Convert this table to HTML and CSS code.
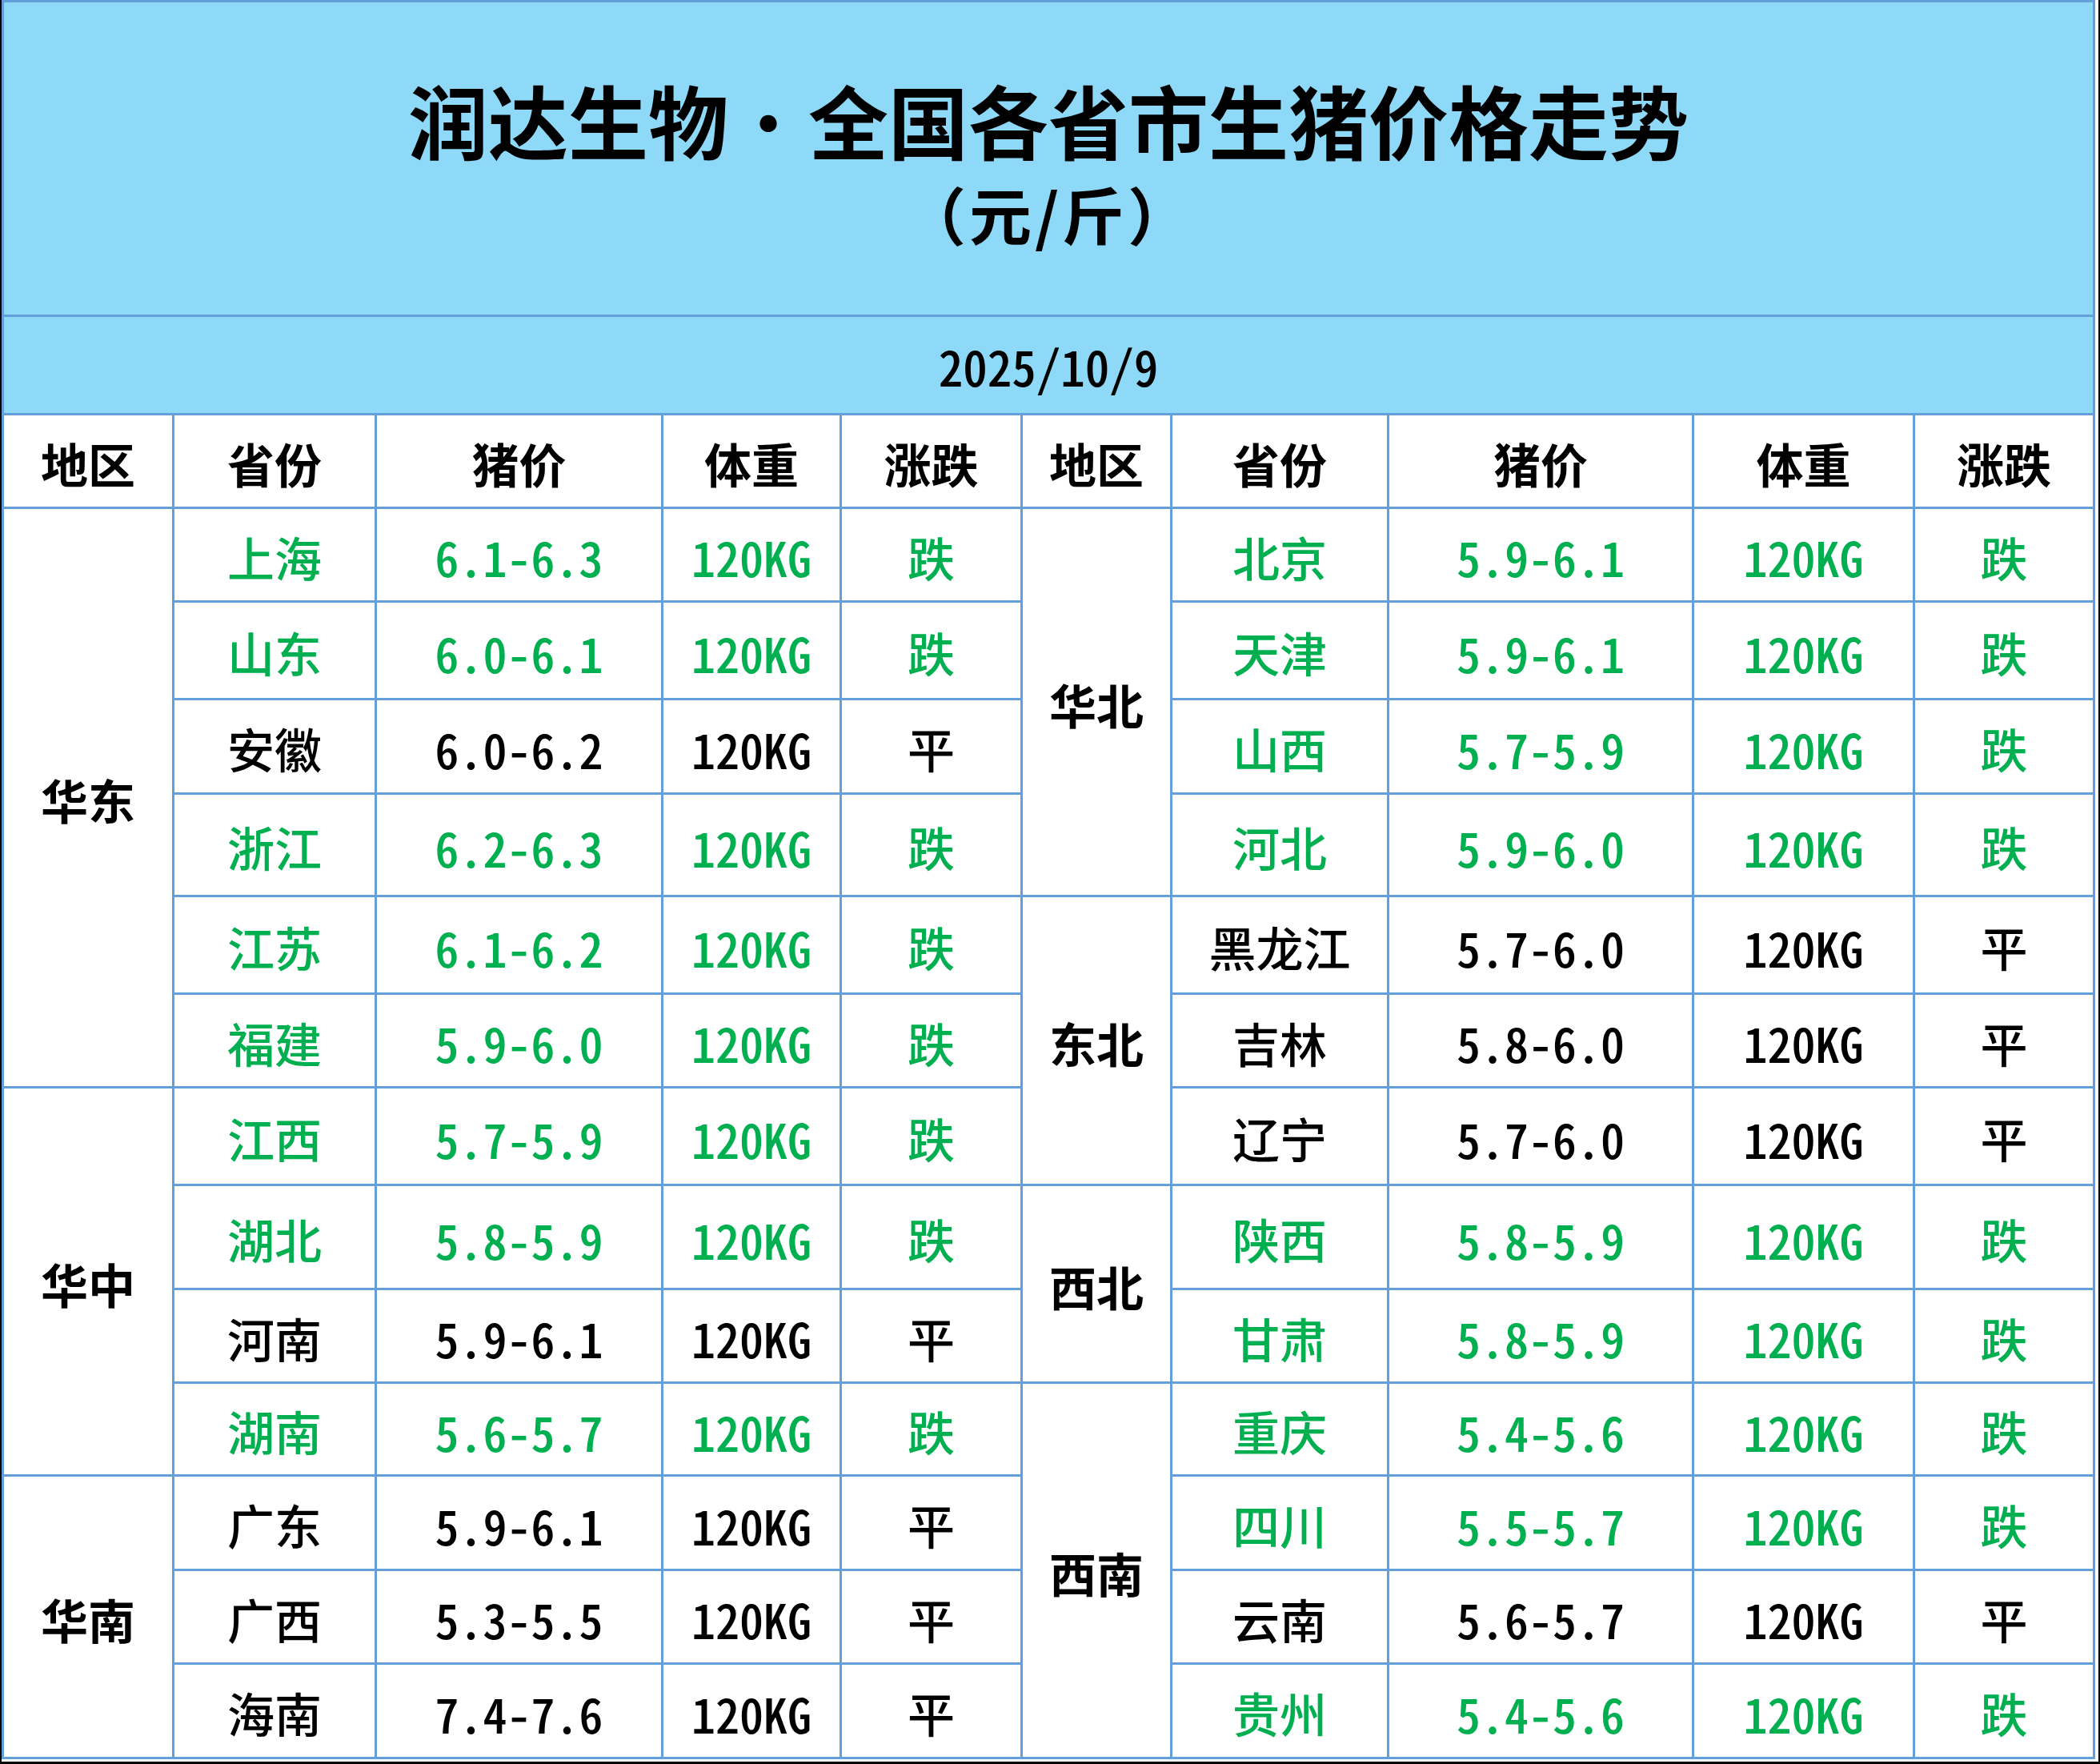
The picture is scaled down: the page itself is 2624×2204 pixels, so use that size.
FILE: index.html
```html
<!DOCTYPE html>
<html lang="zh-CN">
<head>
<meta charset="utf-8">
<title>润达生物·全国各省市生猪价格走势</title>
<link rel="stylesheet" href="styles.css">
</head>
<body>
<div class="frame">
  <div class="sheet">
    <div class="cell title-cell">
      <div class="title">润达生物<span class="dot">·</span>全国各省市生猪价格走势</div>
      <div class="subtitle">（元/斤）</div>
    </div>
    <div class="cell date-cell">2025/10/9</div>

    <div class="cell head">地区</div>
    <div class="cell head">省份</div>
    <div class="cell head">猪价</div>
    <div class="cell head">体重</div>
    <div class="cell head">涨跌</div>
    <div class="cell head">地区</div>
    <div class="cell head">省份</div>
    <div class="cell head">猪价</div>
    <div class="cell head">体重</div>
    <div class="cell head">涨跌</div>

    <!-- row 1 -->
    <div class="cell region span-6">华东</div>
    <div class="cell down">上海</div>
    <div class="cell num down">6.1-6.3</div>
    <div class="cell num down">120KG</div>
    <div class="cell down">跌</div>
    <div class="cell region span-4">华北</div>
    <div class="cell down">北京</div>
    <div class="cell num down">5.9-6.1</div>
    <div class="cell num down">120KG</div>
    <div class="cell down">跌</div>

    <!-- row 2 -->
    <div class="cell down">山东</div>
    <div class="cell num down">6.0-6.1</div>
    <div class="cell num down">120KG</div>
    <div class="cell down">跌</div>
    <div class="cell down">天津</div>
    <div class="cell num down">5.9-6.1</div>
    <div class="cell num down">120KG</div>
    <div class="cell down">跌</div>

    <!-- row 3 -->
    <div class="cell">安徽</div>
    <div class="cell num">6.0-6.2</div>
    <div class="cell num">120KG</div>
    <div class="cell">平</div>
    <div class="cell down">山西</div>
    <div class="cell num down">5.7-5.9</div>
    <div class="cell num down">120KG</div>
    <div class="cell down">跌</div>

    <!-- row 4 -->
    <div class="cell down">浙江</div>
    <div class="cell num down">6.2-6.3</div>
    <div class="cell num down">120KG</div>
    <div class="cell down">跌</div>
    <div class="cell down">河北</div>
    <div class="cell num down">5.9-6.0</div>
    <div class="cell num down">120KG</div>
    <div class="cell down">跌</div>

    <!-- row 5 -->
    <div class="cell down">江苏</div>
    <div class="cell num down">6.1-6.2</div>
    <div class="cell num down">120KG</div>
    <div class="cell down">跌</div>
    <div class="cell region span-3">东北</div>
    <div class="cell">黑龙江</div>
    <div class="cell num">5.7-6.0</div>
    <div class="cell num">120KG</div>
    <div class="cell">平</div>

    <!-- row 6 -->
    <div class="cell down">福建</div>
    <div class="cell num down">5.9-6.0</div>
    <div class="cell num down">120KG</div>
    <div class="cell down">跌</div>
    <div class="cell">吉林</div>
    <div class="cell num">5.8-6.0</div>
    <div class="cell num">120KG</div>
    <div class="cell">平</div>

    <!-- row 7 -->
    <div class="cell region span-4">华中</div>
    <div class="cell down">江西</div>
    <div class="cell num down">5.7-5.9</div>
    <div class="cell num down">120KG</div>
    <div class="cell down">跌</div>
    <div class="cell">辽宁</div>
    <div class="cell num">5.7-6.0</div>
    <div class="cell num">120KG</div>
    <div class="cell">平</div>

    <!-- row 8 -->
    <div class="cell down">湖北</div>
    <div class="cell num down">5.8-5.9</div>
    <div class="cell num down">120KG</div>
    <div class="cell down">跌</div>
    <div class="cell region span-2">西北</div>
    <div class="cell down">陕西</div>
    <div class="cell num down">5.8-5.9</div>
    <div class="cell num down">120KG</div>
    <div class="cell down">跌</div>

    <!-- row 9 -->
    <div class="cell">河南</div>
    <div class="cell num">5.9-6.1</div>
    <div class="cell num">120KG</div>
    <div class="cell">平</div>
    <div class="cell down">甘肃</div>
    <div class="cell num down">5.8-5.9</div>
    <div class="cell num down">120KG</div>
    <div class="cell down">跌</div>

    <!-- row 10 -->
    <div class="cell down">湖南</div>
    <div class="cell num down">5.6-5.7</div>
    <div class="cell num down">120KG</div>
    <div class="cell down">跌</div>
    <div class="cell region span-4">西南</div>
    <div class="cell down">重庆</div>
    <div class="cell num down">5.4-5.6</div>
    <div class="cell num down">120KG</div>
    <div class="cell down">跌</div>

    <!-- row 11 -->
    <div class="cell region span-3">华南</div>
    <div class="cell">广东</div>
    <div class="cell num">5.9-6.1</div>
    <div class="cell num">120KG</div>
    <div class="cell">平</div>
    <div class="cell down">四川</div>
    <div class="cell num down">5.5-5.7</div>
    <div class="cell num down">120KG</div>
    <div class="cell down">跌</div>

    <!-- row 12 -->
    <div class="cell">广西</div>
    <div class="cell num">5.3-5.5</div>
    <div class="cell num">120KG</div>
    <div class="cell">平</div>
    <div class="cell">云南</div>
    <div class="cell num">5.6-5.7</div>
    <div class="cell num">120KG</div>
    <div class="cell">平</div>

    <!-- row 13 -->
    <div class="cell">海南</div>
    <div class="cell num">7.4-7.6</div>
    <div class="cell num">120KG</div>
    <div class="cell">平</div>
    <div class="cell down">贵州</div>
    <div class="cell num down">5.4-5.6</div>
    <div class="cell num down">120KG</div>
    <div class="cell down">跌</div>
  </div>
</div>
</body>
</html>
```

FILE: styles.css
```css
html, body {
  margin: 0;
  padding: 0;
  background: #000;
}

body {
  width: 2624px;
  height: 2204px;
  overflow: hidden;
}

.frame {
  margin-left: 2px;
  width: 2620px;
  height: 2201px;
  background: #fff;
}

.sheet {
  display: grid;
  grid-template-columns: 213px 253px 358px 223px 226px 187px 271px 381px 276px 225px;
  grid-template-rows: 393px 123px 117px 117px 122px 118px 128px 122px 117px 122px 130px 117px 116px 118px 117px 118px;
  width: max-content;
  border-left: 3px solid #629fdb;
  border-top: 3px solid #629fdb;
  font-family: "Noto Sans CJK SC", "Noto Sans", sans-serif;
  color: #000;
}

.cell {
  box-sizing: border-box;
  border-right: 3px solid #629fdb;
  border-bottom: 3px solid #629fdb;
  display: flex;
  align-items: center;
  justify-content: center;
  font-size: 59px;
  font-weight: 500;
  line-height: 1;
  padding-top: 4px;
  white-space: nowrap;
}

.title-cell {
  grid-column: 1 / -1;
  background: #8ed9f7;
  flex-direction: column;
  justify-content: flex-start;
  padding-top: 96px;
}

.title {
  font-size: 100px;
  font-weight: 700;
  line-height: 100px;
}

.dot {
  display: inline-block;
  width: 1em;
  text-align: center;
  font-weight: 400;
}

.subtitle {
  font-size: 78px;
  font-weight: 700;
  line-height: 78px;
  letter-spacing: 4px;
  margin-top: 28px;
}

.date-cell {
  grid-column: 1 / -1;
  background: #8ed9f7;
  font-size: 61px;
  font-weight: 500;
  font-feature-settings: "hwid" 1;
  padding-top: 0;
}

.head {
  font-weight: 700;
}

.region {
  font-weight: 700;
}

.num {
  font-feature-settings: "hwid" 1;
  font-size: 60px;
}

.down {
  color: #00b050;
}

.span-2 { grid-row: span 2; }
.span-3 { grid-row: span 3; }
.span-4 { grid-row: span 4; }
.span-6 { grid-row: span 6; }
```
